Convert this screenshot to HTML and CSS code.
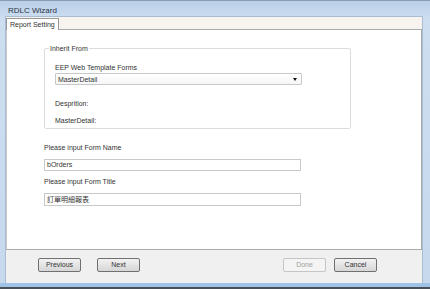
FILE: index.html
```html
<!DOCTYPE html>
<html>
<head>
<meta charset="utf-8">
<link rel="stylesheet" href="styles.css">
</head>
<body>
<div class="window">
  <div class="titlebar">RDLC Wizard</div>
  <div class="client">
    <div class="tabstrip"><div class="tab">Report Setting</div></div>
    <div class="panel">
      <fieldset class="group">
        <legend>Inherit From</legend>
        <div class="label">EEP Web Template Forms</div>
        <div class="combo"><span>MasterDetail</span><span class="arrow"></span></div>
        <div class="label desc">Desprition:</div>
        <div class="label desc2">MasterDetail:</div>
      </fieldset>
      <div class="label name-label">Please input Form Name</div>
      <div class="textbox name-box">bOrders</div>
      <div class="label title-label">Please input Form Title</div>
      <div class="textbox title-box cjk">訂單明細報表</div>
    </div>
    <div class="buttons">
      <div class="btn">Previous</div>
      <div class="btn">Next</div>
      <div class="spacer"></div>
      <div class="btn disabled">Done</div>
      <div class="btn">Cancel</div>
    </div>
  </div>
  <div class="bottomline"></div>
</div>
</body>
</html>
```
FILE: styles.css
```css
html, body { margin: 0; padding: 0; background: #fff; }
body { font-family: "Liberation Sans", Arial, sans-serif; font-size: 7px; color: #333; }
.window {
  width: 430px; height: 289px; box-sizing: border-box;
  background: linear-gradient(#b9cfe8, #cddef0 18px, #c6d9ed);
  border-top: 1px solid #8a9cb0;
  display: flex; flex-direction: column;
}
.titlebar { height: 15px; line-height: 20px; padding-left: 8px; font-size: 8px; color: #2a3444; }
.client {
  flex: 1; margin: 0 7px 0 5px; background: #f0f0f0;
  border: 1px solid #a9bcd1; border-bottom: none;
  display: flex; flex-direction: column;
}
.tabstrip { height: 12px; display: flex; align-items: flex-end; background: #f7f3ef; }
.tab {
  height: 11px; line-height: 11px; padding: 0 3px; margin-bottom: -1px;
  background: #fff; border: 1px solid #9a9a9a; border-bottom: none; position: relative; z-index: 1;
}
.panel {
  height: 221px; background: #fff; border: 1px solid #aaa; border-left-color: #c8c8c8;
  padding: 0 0 0 37px; box-sizing: border-box;
}
.group {
  width: 307px; height: 84px; box-sizing: border-box; margin: 15px 0 0 0; padding: 11px 0 0 10px;
  border: 1px solid #dcdcdc; border-radius: 2px;
}
.group legend { padding: 0 1px; margin-left: -6px; }
.label { height: 10px; line-height: 10px; }
.combo {
  width: 247px; height: 12px; box-sizing: border-box; border: 1px solid #c8c8c8; border-radius: 1px;
  display: flex; align-items: center; justify-content: space-between; padding: 0 4px 0 2px;
  background: linear-gradient(#fff, #f6f6f6);
}
.arrow { width: 0; height: 0; border-left: 2px solid transparent; border-right: 2px solid transparent; border-top: 3px solid #111; }
.desc { margin-top: 14px; }
.desc2 { margin-top: 7px; }
.textbox {
  width: 257px; height: 12px; line-height: 10px; box-sizing: border-box; border: 1px solid #c9c9c9;
  padding: 0 2px;
}
.name-label { margin-top: 14px; }
.name-box { margin-top: 6px; }
.title-label { margin-top: 6px; }
.title-box { margin-top: 6px; height: 13px; line-height: 11px; }
.cjk { font-family: "Liberation Sans", "Noto Sans CJK TC", sans-serif; }
.buttons { flex: 1; display: flex; align-items: center; padding: 0 45px 3px 32px; gap: 16px; }
.spacer { flex: 1; }
.btn {
  width: 43px; height: 14px; box-sizing: border-box; border: 1px solid #707070; border-radius: 2px;
  background: linear-gradient(#f2f2f2, #e4e4e4 50%, #d6d6d6);
  text-align: center; line-height: 12px;
}
.btn.disabled { border-color: #c5c5c5; background: #f4f4f4; color: #a0a0a0; }
.buttons .btn:nth-child(4) { margin-right: -8px; }
.bottomline { height: 4px; border-bottom: 2px solid #4a5058; background: #9ec3e6; }
```
